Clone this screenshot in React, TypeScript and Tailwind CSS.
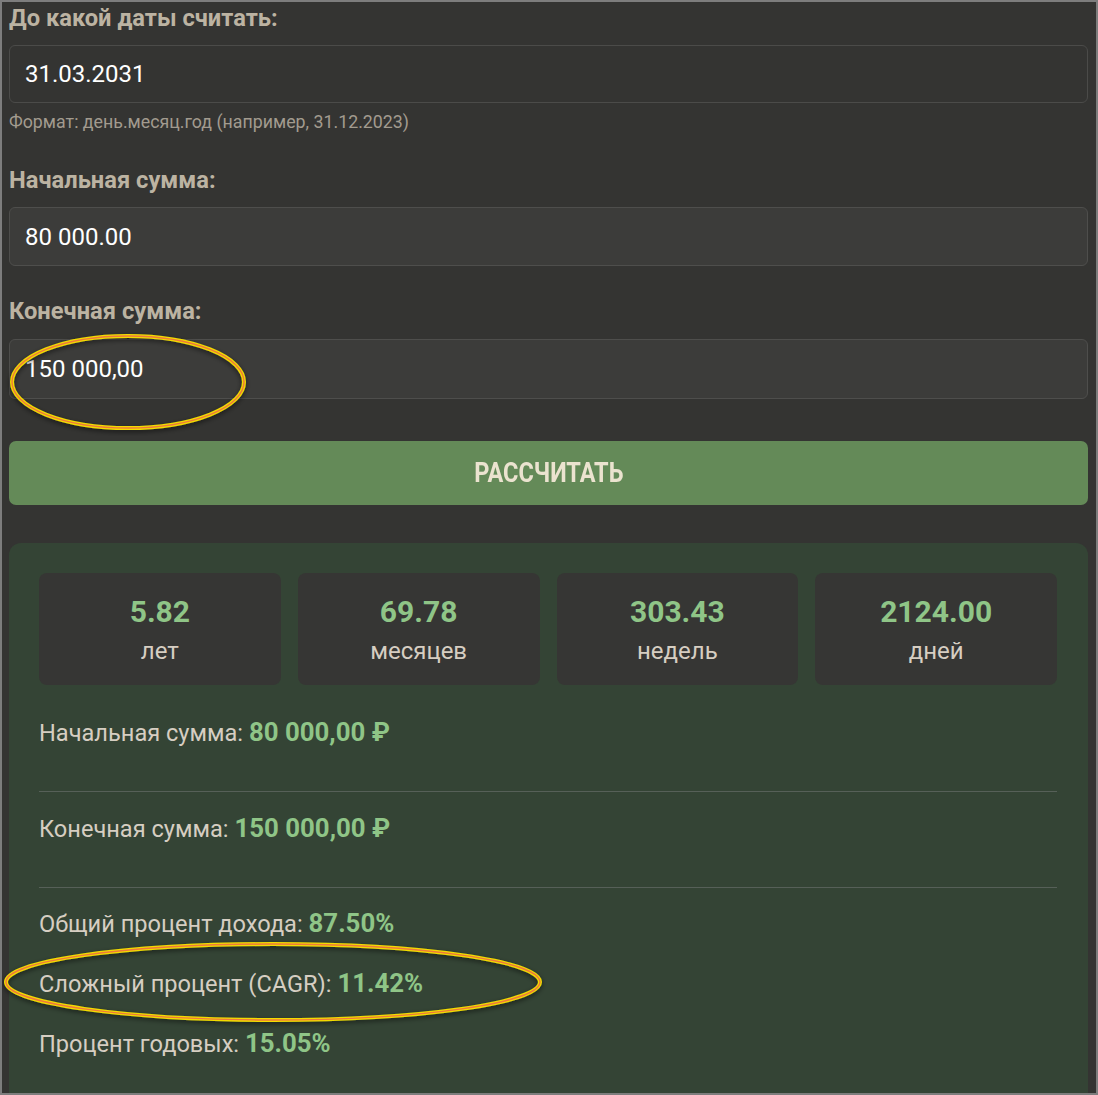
import React from "react";

const Oval = ({ cx, cy, rx, ry, w, h, left, top }: { cx: number; cy: number; rx: number; ry: number; w: number; h: number; left: string; top: string }) => (
  <svg className={`absolute pointer-events-none ${left} ${top}`} width={w} height={h} viewBox={`0 0 ${w} ${h}`}>
    <defs>
      <filter id={`sh${cx}`} x="-10%" y="-30%" width="120%" height="160%">
        <feDropShadow dx="0" dy="2" stdDeviation="2.5" floodColor="#000" floodOpacity="0.55" />
      </filter>
    </defs>
    <g filter={`url(#sh${cx})`}>
      <ellipse cx={cx} cy={cy} rx={rx} ry={ry} fill="none" stroke="#f2dc00" strokeWidth="4" />
      <ellipse cx={cx} cy={cy} rx={rx} ry={ry} fill="none" stroke="#ee7a3a" strokeWidth="1.4" />
    </g>
  </svg>
);

const Row = ({ label, value, className = "" }: { label: string; value: string; className?: string }) => (
  <div className={`text-[23.6px] text-[#d6cec2] ${className}`}>
    <div className="h-[30px] leading-[30px] whitespace-nowrap">
      {label} <span className="text-[25.8px] leading-[20px] font-bold text-[#8fc587]">{value}</span>
    </div>
  </div>
);

export default function App() {
  const font = { fontFamily: "Roboto, 'Noto Sans', sans-serif" };
  return (
    <div className="relative w-[1098px] h-[1095px] overflow-hidden border-2 border-[#7d7d7d] bg-[#343432]" style={font}>
      <div className="pl-[7px] pr-[8px] pt-[4px]">
        <div className="text-[23.7px] leading-[24px] font-bold text-[#bcb3a2]">До какой даты считать:</div>
        <div className="mt-[15px] h-[58px] rounded-[6px] border border-[#4b4b49] bg-[#343432] px-[15px] flex items-center text-[24px] text-white">31.03.2031</div>
        <div className="mt-[9px] text-[17.8px] leading-[20px] text-[#a29b8f]">Формат: день.месяц.год (например, 31.12.2023)</div>

        <div className="mt-[36px] text-[23.7px] leading-[24px] font-bold text-[#bcb3a2]">Начальная сумма:</div>
        <div className="mt-[15px] h-[59px] rounded-[6px] border border-[#4e4e4c] bg-[#3c3c3a] px-[15px] flex items-center text-[24px] text-white">80 000.00</div>

        <div className="mt-[33px] text-[23.7px] leading-[24px] font-bold text-[#bcb3a2]">Конечная сумма:</div>
        <div className="mt-[16px] h-[60px] rounded-[6px] border border-[#4e4e4c] bg-[#3c3c3a] px-[15px] flex items-center text-[24px] text-white">150 000,00</div>

        <div className="mt-[42px] h-[64px] rounded-[7px] bg-[#648a58] flex items-center justify-center">
          <span className="inline-block scale-x-[0.84] text-[28px] leading-[32px] font-bold text-[#ebe3cf]">РАССЧИТАТЬ</span>
        </div>

        <div className="mt-[38px] rounded-[12px] bg-[#344435] pt-[30px] pl-[30px] pr-[31px] pb-[60px]">
          <div className="grid grid-cols-4 gap-[17px]">
            {[
              ["5.82", "лет"],
              ["69.78", "месяцев"],
              ["303.43", "недель"],
              ["2124.00", "дней"],
            ].map(([v, l]) => (
              <div key={l} className="h-[112px] rounded-[8px] bg-[#363634] flex flex-col items-center pt-[21px]">
                <div className="text-[30px] leading-[36px] font-bold text-[#8fc587]">{v}</div>
                <div className="mt-[7px] text-[24px] leading-[28px] text-[#d6cec2]">{l}</div>
              </div>
            ))}
          </div>

          <Row className="mt-[33px] pb-[43px] border-b border-[#566058]" label="Начальная сумма:" value="80 000,00 ₽" />
          <Row className="pt-[22px] pb-[43px] border-b border-[#566058]" label="Конечная сумма:" value="150 000,00 ₽" />
          <div className="pt-[21px] flex flex-col gap-[30px]">
            <Row label="Общий процент дохода:" value="87.50%" />
            <Row label="Сложный процент (CAGR):" value="11.42%" />
            <Row label="Процент годовых:" value="15.05%" />
          </div>
        </div>
      </div>

      <Oval cx={128} cy={50} rx={116} ry={46} w={260} h={104} left="left-[-2px]" top="top-[330px]" />
      <Oval cx={273} cy={42} rx={267} ry={38} w={560} h={90} left="left-[-2px]" top="top-[938px]" />
    </div>
  );
}
